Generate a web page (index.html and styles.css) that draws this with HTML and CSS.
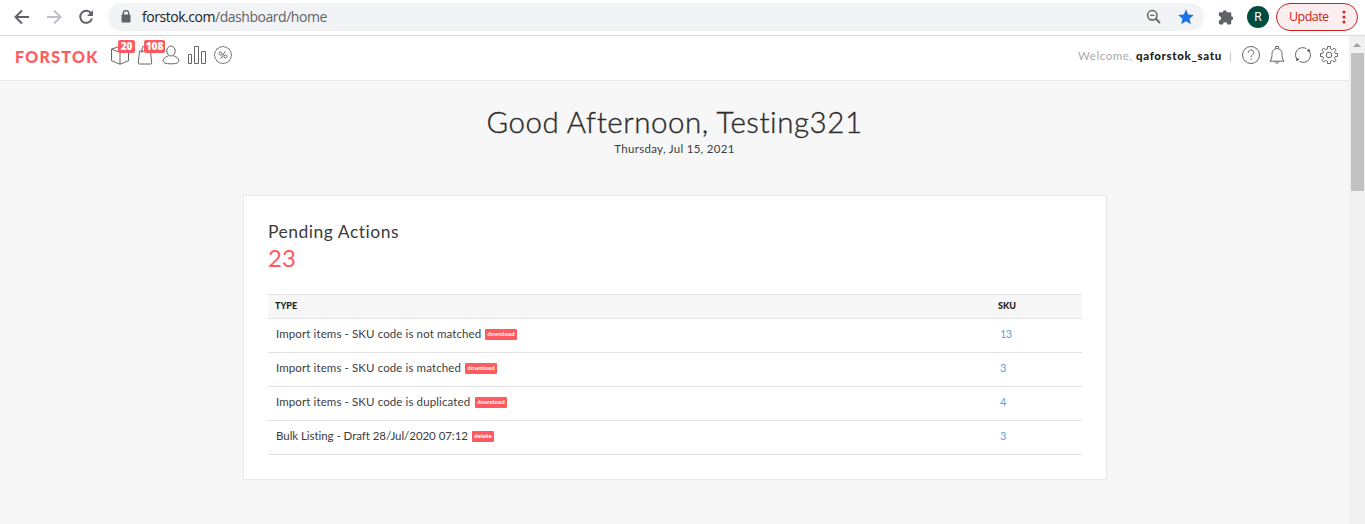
FILE: index.html
```html
<!DOCTYPE html>
<html lang="en">
<head>
<meta charset="utf-8">
<title>Forstok Dashboard</title>
<link rel="stylesheet" href="styles.css">
</head>
<body>
<div class="toolbar">
  <div class="nav-buttons">
    <svg width="16" height="16" viewBox="0 0 16 16" fill="none" stroke="#5f6368" stroke-width="2"><path d="M15 8H2M8 1.5L1.5 8 8 14.5"/></svg>
    <svg width="16" height="16" viewBox="0 0 16 16" fill="none" stroke="#bdc1c6" stroke-width="2"><path d="M1 8h13M8 1.5L14.500 8 8 14.500"/></svg>
    <svg width="16" height="16" viewBox="0 0 16 16"><path d="M13.300 4.600A6 6 0 1 0 14 9.500" fill="none" stroke="#5f6368" stroke-width="2"/><path d="M15 1v6H9z" fill="#5f6368"/></svg>
  </div>
  <div class="address">
    <svg class="lock" width="10" height="13" viewBox="0 0 10 13"><path d="M2.300 5V3.300a2.700 2.700 0 0 1 5.400 0V5" fill="none" stroke="#5f6368" stroke-width="1.400"/><rect x="0.500" y="4.500" width="9" height="8" rx="1" fill="#5f6368"/></svg>
    <div class="url"><span class="host">forstok.com</span>/dashboard/home</div>
    <svg class="magnifier" width="15" height="15" viewBox="0 0 15 15" fill="none" stroke="#5f6368"><circle cx="6.300" cy="6.300" r="4.700" stroke-width="1.500"/><path d="M9.700 9.700L14 14" stroke-width="1.900"/><path d="M4 6.300h4.600" stroke-width="1.200"/></svg>
    <svg width="16" height="16" viewBox="0 0 16 16" fill="#1a73e8"><path d="M8 .3l2.150 5.200 5.600.500-4.200 3.700 1.300 5.500L8 12.300 3.150 15.200l1.300-5.500L.25 6l5.600-.5z"/></svg>
  </div>
  <svg class="puzzle" width="16" height="16" viewBox="0 0 16 16" fill="#5f6368"><path d="M1.200 3.200h3.600a2 2 0 1 1 4 0H12a1.300 1.300 0 0 1 1.300 1.300V7.300a1.900 1.900 0 1 1 0 3.800v3A1.300 1.300 0 0 1 12 15.400H9.300a2.200 2.200 0 0 0-4.400 0H2.200A1.300 1.300 0 0 1 .9 14.100v-2.600a2.200 2.200 0 0 0 0-4.400V3.700z"/></svg>
  <div class="avatar">R</div>
  <div class="update"><span>Update</span><svg width="4" height="14" viewBox="0 0 4 14" fill="#c5221f"><circle cx="2" cy="2" r="1.500"/><circle cx="2" cy="7" r="1.500"/><circle cx="2" cy="12" r="1.500"/></svg></div>
</div>
<div class="viewport">
  <div class="page">
    <header class="header">
      <div class="logo">FORSTOK</div>
      <nav class="menu">
        <a class="item box"><svg width="20" height="20" viewBox="0 0 20 20"><path d="M1.500 4.200L10 7.300l8.500-3.100v11.600L10 19.200l-8.500-3.400zM10 7.300v11.900M1.500 4.200L9 1.500l9.500 2.700"/></svg><span class="badge">20</span></a>
        <a class="item bag"><svg width="16" height="20" viewBox="0 0 16 20"><path d="M2.500 6h11l1.200 12a1 1 0 0 1-1 1H2.300a1 1 0 0 1-1-1zM5 8V4a3 3 0 0 1 6 0v4"/></svg><span class="badge wide">108</span></a>
        <a class="item user"><svg width="18" height="20" viewBox="0 0 18 20"><ellipse cx="9" cy="6" rx="4.200" ry="5"/><path d="M6.500 10.800C3 12 1.200 13.500 1.200 15.700S3.500 18.800 9 18.800s7.800-.9 7.800-3.100S15 12 11.500 10.800"/></svg></a>
        <a class="item bars"><svg width="20" height="20" viewBox="0 0 20 20"><path d="M1.500 9.500h3v9h-3zM7.500 1.500h4v17h-4zM14.500 6.500h4v12h-4z"/></svg></a>
        <a class="item percent"><svg width="20" height="20" viewBox="0 0 20 20"><path d="M10 1.200q1.500 1.500 3.300.700 1 1.900 2.900 1.900.1 2 1.900 2.900-.6 1.800.7 3.300-1.300 1.500-.7 3.300-1.800.9-1.900 2.900-1.900.1-2.900 2-1.800-.7-3.300.6-1.500-1.300-3.300-.6-1-1.900-2.900-2-.1-2-1.900-2.900.6-1.800-.7-3.300 1.300-1.500.7-3.300 1.800-.9 1.900-2.900 1.900 0 2.900-1.900 1.800.8 3.300-.7z" stroke="#777"/><path d="M12 6.500l-4 7"/><circle cx="7.500" cy="8.500" r="1.500"/><circle cx="12.500" cy="11.500" r="1.500"/></svg></a>
      </nav>
      <div class="welcome">Welcome, <b>qaforstok_satu</b></div>
      <span class="divider"></span>
      <nav class="tools">
        <svg width="20" height="20" viewBox="0 0 20 20"><circle cx="10" cy="10" r="8.500"/><path d="M7.200 7.800C7.200 4 12.800 4.200 12.800 7.500c0 2.200-2.800 2-2.800 4.700M10 13.500v1.500"/></svg>
        <svg width="20" height="20" viewBox="0 0 20 20"><path d="M3 16.200q2-1.800 2-5.700V8.500a5 5 0 0 1 10 0v2q0 3.900 2 5.700zM8.500 3.300V1.500h3v1.800M8.200 16.500q1.800 3.700 3.600 0"/></svg>
        <svg width="20" height="20" viewBox="0 0 20 20"><path d="M4.700 15A7.200 7.200 0 0 1 13.500 3.700M15.300 5A7.200 7.200 0 0 1 6.500 16.300"/><path d="M14 5.600l2.200-1.300.4 2.400zM6 14.400l-2.200 1.300-.4-2.400z" fill="#666"/></svg>
        <svg width="20" height="20" viewBox="0 0 20 20"><path d="M8.500 1.500h3v2.400l2 .9L15.200 3l2 2-1.700 1.800.8 1.700h2.200v3h-2.200l-.8 1.900 1.700 1.700-2 2-1.700-1.700-2 .9v2.200h-3v-2.200l-2-.9-1.700 1.700-2-2 1.700-1.700-.8-1.900H1.500v-3h2.200l.8-1.700L2.800 5l2-2 1.700 1.800 2-.9z" stroke-linejoin="round"/><circle cx="10" cy="10" r="2.800"/></svg>
      </nav>
    </header>
    <main class="content">
      <h1 class="greeting"><span>Good Afternoon, Testing321</span></h1>
      <div class="date">Thursday, Jul 15, 2021</div>
      <section class="card">
        <h2 class="title">Pending Actions</h2>
        <div class="count">23</div>
        <div class="table">
          <div class="row head"><span>TYPE</span><span>SKU</span></div>
          <div class="row"><span class="type"><span class="t1">Import items - SKU code is not matched</span><em class="tag">download</em></span><a>13</a></div>
          <div class="row"><span class="type"><span class="t2">Import items - SKU code is matched</span><em class="tag">download</em></span><a>3</a></div>
          <div class="row"><span class="type"><span class="t3">Import items - SKU code is duplicated</span><em class="tag">download</em></span><a>4</a></div>
          <div class="row"><span class="type"><span class="t4">Bulk Listing - Draft 28/Jul/2020 07:12</span><em class="tag small">delete</em></span><a>3</a></div>
        </div>
      </section>
    </main>
  </div>
  <div class="scrollbar"><svg width="16" height="17" viewBox="0 0 16 17"><path d="M4 11l4-4 4 4z" fill="#a3a3a3"/></svg><div class="thumb"></div></div>
</div>
</body>
</html>
```
FILE: styles.css
```css
* { box-sizing: border-box; }
body { margin: 0; height: 524px; overflow: hidden; background: #f7f7f7; font-family: Lato, "Open Sans", sans-serif; color: #3c3c3c; }
svg { display: block; flex: none; }
.toolbar { height: 36px; display: flex; align-items: center; background: #fff; border-bottom: 1px solid #dadce0; padding: 0 7px 2px 14px; }
.nav-buttons { display: flex; gap: 16px; width: 94px; flex: none; }
.address { width: 1096px; flex: none; height: 28px; border-radius: 14px; background: #f1f3f4; display: flex; align-items: center; padding: 0 10px 0 13px; }
.url { flex: 1; margin-left: 11px; font: 14px/20px "Open Sans", sans-serif; letter-spacing: -0.46px; color: #5f6368; }
.host { color: #202124; }
.magnifier { margin-right: 17px; }
.puzzle { margin-left: 14px; }
.avatar { margin-left: 13px; width: 22px; height: 22px; flex: none; border-radius: 50%; background: #004d40; color: #fff; font: 12px/22px Roboto, sans-serif; text-align: center; }
.update { margin-left: 7px; width: 82px; height: 28px; flex: none; border: 1px solid #c5221f; border-radius: 14px; background: #fceeee; color: #c5221f; font: 12.500px/20px "Open Sans", sans-serif; letter-spacing: -0.55px; display: flex; align-items: center; justify-content: space-between; padding: 0 11px 0 12px; }
.viewport { height: 488px; display: flex; }
.page { flex: 1; }
.header { height: 45px; background: #fff; border-bottom: 1px solid #e7e7e7; display: flex; align-items: center; padding: 0 10px 6px 15px; }
.logo { width: 95px; margin-top: 4px; color: #ff5a60; font-size: 16px; line-height: 20px; font-weight: 900; letter-spacing: 1.3px; }
.menu { display: flex; gap: 7px; }
.menu svg, .tools svg { fill: none; stroke: #666; stroke-width: 1; }
.item { position: relative; }
.user { margin-left: 2px; }
.percent { margin-left: -1px; }
.badge { position: absolute; left: 8px; top: -5px; width: 17px; height: 13px; border-radius: 2px; background: #ff5a60; color: #fff; font: 800 10px/12px "Open Sans", sans-serif; text-align: center; }
.wide { left: 7px; width: 21px; }
.welcome { margin-left: auto; margin-top: 2px; width: 152px; white-space: nowrap; color: #aaa; font-size: 11.500px; line-height: 16px; letter-spacing: .55px; }
.welcome b { color: #222; font-weight: 900; letter-spacing: .65px; }
.divider { width: 1px; height: 10px; margin-top: 3px; background: #ccc; }
.tools { display: flex; gap: 6px; margin-left: 10px; }
.content { padding-top: 22px; }
.greeting { margin: 0; text-align: center; font-size: 29.500px; line-height: 38px; font-weight: 300; letter-spacing: .55px; color: #2c2c2c; -webkit-text-stroke: .35px #2c2c2c; }
.date { text-align: center; font-size: 11.500px; line-height: 16px; letter-spacing: .3px; }
.card { width: 864px; height: 285px; margin: 38px 0 0 243px; background: #fff; border: 1px solid #e7e7e7; padding: 24px; }
.title { margin: 0; font-size: 17.500px; line-height: 24px; font-weight: 400; letter-spacing: .5px; }
.count { color: #ff5a60; font-size: 24px; line-height: 28px; }
.table { margin-top: 22px; border-top: 1px solid #e3e3e3; }
.row { height: 34px; border-bottom: 1px solid #e3e3e3; display: grid; grid-template-columns: 723px 1fr; align-items: center; padding: 0 0 4px 8px; font-size: 11.500px; }
.row.head { height: 24px; padding: 0 0 2px 7px; background: #f7f7f7; font-size: 9px; font-weight: 900; color: #222; }
.row a { color: #5aa2e6; font-size: 11px; padding-left: 1px; letter-spacing: -.6px; }
.type { display: flex; align-items: center; white-space: nowrap; letter-spacing: .11px; }
.t1 { width: 209px; }
.t2 { width: 189px; }
.t3 { width: 199px; }
.t4 { width: 196px; letter-spacing: -.05px; }
.tag { width: 32px; height: 11px; margin-top: 2px; border-radius: 1px; background: #ff5a60; color: #fff; font: 900 6px/10px Lato, sans-serif; letter-spacing: .1px; text-align: center; }
.tag.small { width: 22px; }
.scrollbar { width: 16px; background: #f1f1f1; }
.thumb { width: 13px; height: 138px; margin-left: 2px; background: #c1c1c1; }
```
